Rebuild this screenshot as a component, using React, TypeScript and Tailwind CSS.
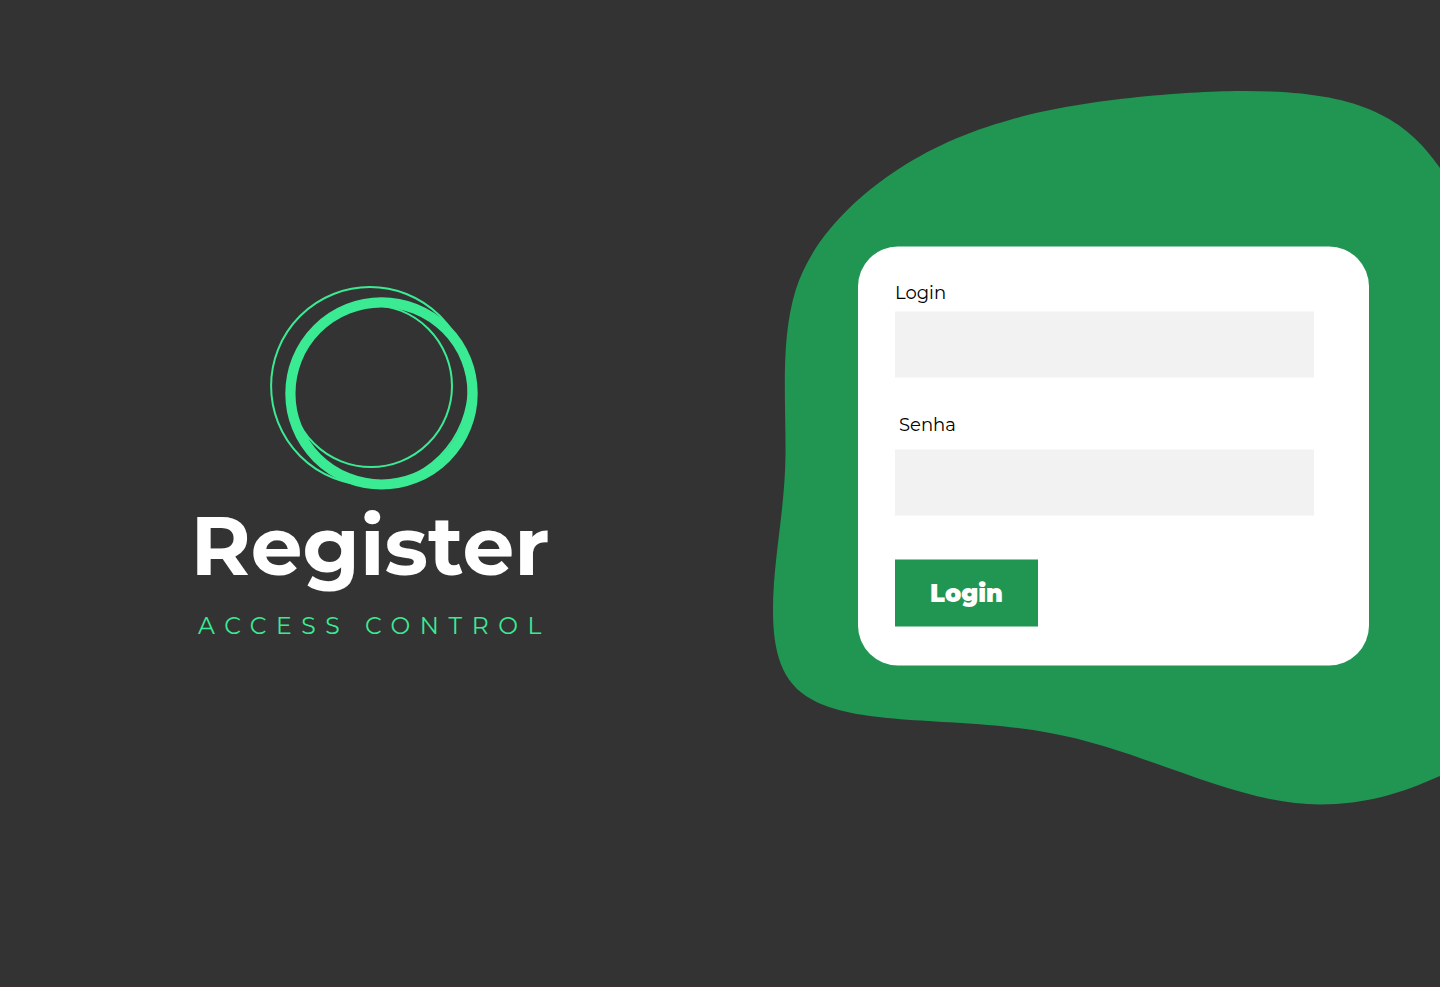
export default function App() {
  return (
    <main className="relative isolate flex h-[987px] w-[1440px] overflow-hidden border-b border-[#3a3035] bg-[#333333] font-['Montserrat','Inter',sans-serif]">
      <svg className="absolute inset-0 -z-10" width="1440" height="987" viewBox="0 0 1440 987" aria-hidden="true">
        <path
          fill="#219653"
          d="M1440 168 C1402 112 1350 91 1245 91 C1190 91 1075 99 1003 122 C900 151 818 220 796 289 C780 340 786 400 785.500 455 C785 510 773 560 773 610 C773 651 781 683 812 699.500 C860 727 960 716 1050 733 C1145 750 1235 804.500 1320 804.500 C1365 804.500 1402 793 1440 776 Z"
        />
      </svg>

      <section className="flex w-[742px] flex-col items-center pt-[280px]">
        <svg width="220" height="220" viewBox="260 280 220 220" fill="none" stroke="#3BEB93" aria-hidden="true" className="-ml-[2px]">
          <circle cx="370" cy="386" r="98.900" strokeWidth="2" />
          <circle cx="371" cy="386" r="81" strokeWidth="2" />
          <circle cx="381.500" cy="393.400" r="91.100" strokeWidth="10.200" />
        </svg>
        <h1 className="-mt-[2px] -ml-[2px] text-[82px] leading-[96px] font-bold whitespace-nowrap text-white">Register</h1>
        <p className="mt-[12px] ml-[7px] text-[23.500px] leading-[40px] font-normal tracking-[9.600px] whitespace-nowrap text-[#3BEB93]">ACCESS CONTROL</p>
      </section>

      <form className="mt-[247px] ml-[116px] flex h-[419px] w-[511px] -translate-y-[0.500px] flex-col items-start rounded-[40px] bg-white pt-[34px] pl-[37px]" onSubmit={(e) => e.preventDefault()}>
        <label htmlFor="login" className="text-[18px] leading-[24px] text-black">Login</label>
        <input id="login" className="mt-[7px] h-[66px] w-[419px] bg-[#F2F2F2] px-4 outline-none" />
        <label htmlFor="senha" className="mt-[35px] ml-[4px] text-[18px] leading-[24px] text-black">Senha</label>
        <input id="senha" type="password" className="mt-[13px] h-[66px] w-[419px] bg-[#F2F2F2] px-4 outline-none" />
        <button className="mt-[44px] h-[67px] w-[143px] bg-[#219653] text-[24px] font-black text-white">Login</button>
      </form>
    </main>
  );
}
